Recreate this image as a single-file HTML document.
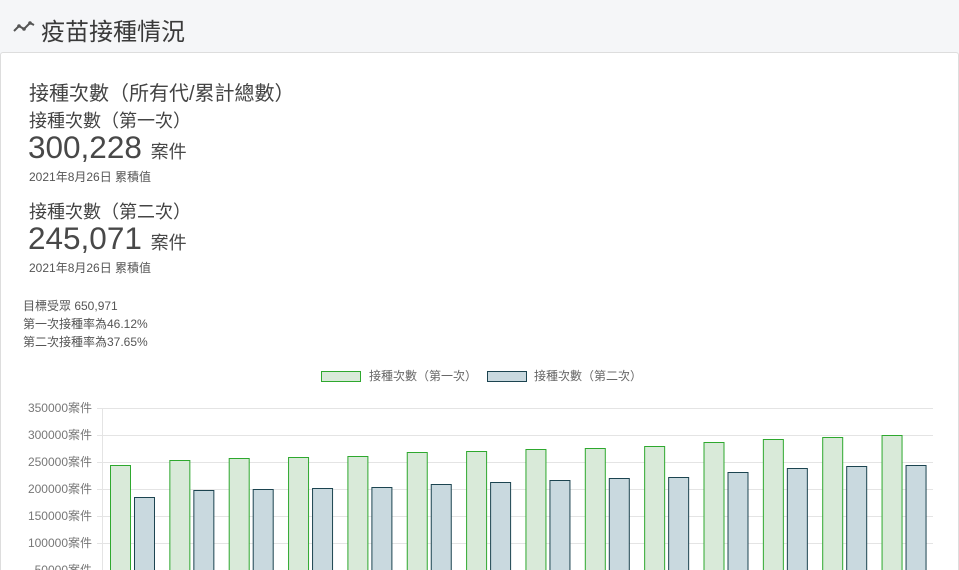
<!DOCTYPE html>
<html><head><meta charset="utf-8"><style>
body{margin:0;width:959px;height:570px;overflow:hidden;background:#f5f6f8;font-family:"Liberation Sans","Noto Sans CJK TC",sans-serif;color:#444;position:relative}
.a{position:absolute;white-space:nowrap}
.card{position:absolute;left:0;top:52px;width:957px;height:517px;background:#fff;border:1px solid #ddd;border-bottom:none;border-radius:3px 3px 0 0}
</style></head><body>
<svg class="a" style="left:12px;top:19px" width="24" height="16" viewBox="0 0 24 16"><polyline points="2,12 7,7 12,10 18,4 22,6" fill="none" stroke="#555" stroke-width="2"/><circle cx="7" cy="7" r="1.8" fill="#555"/><circle cx="12" cy="10" r="1.8" fill="#555"/><circle cx="18" cy="4" r="1.8" fill="#555"/></svg>
<div class="a" style="left:41px;top:12px;font-size:24px;color:#3a3a3a">疫苗接種情況</div>
<div class="card"></div>
<div class="a" style="left:29px;top:77px;font-size:20px;color:#444">接種次數（所有代/累計總數）</div>
<div class="a" style="left:29px;top:107px;font-size:18px;color:#444">接種次數（第一次）</div>
<div class="a" style="left:28px;top:129px;font-size:31.5px;color:#484848">300,228 <span style="font-size:18px">案件</span></div>
<div class="a" style="left:29px;top:168px;font-size:12px;color:#555">2021年8月26日 累積值</div>
<div class="a" style="left:29px;top:198px;font-size:18px;color:#444">接種次數（第二次）</div>
<div class="a" style="left:28px;top:220px;font-size:31.5px;color:#484848">245,071 <span style="font-size:18px">案件</span></div>
<div class="a" style="left:29px;top:259px;font-size:12px;color:#555">2021年8月26日 累積值</div>
<div class="a" style="left:23px;top:297px;font-size:12px;color:#555;line-height:18px">目標受眾 650,971<br>第一次接種率為46.12%<br>第二次接種率為37.65%</div>
<svg class="a" style="left:0;top:360px" width="959" height="210">
<rect x="321.5" y="11.5" width="39" height="10" fill="#d9ead9" stroke="#2ea82e"/>
<text x="369" y="20" font-size="12" fill="#666" font-family="Liberation Sans,Noto Sans CJK TC,sans-serif">接種次數（第一次）</text>
<rect x="487.5" y="11.5" width="39" height="10" fill="#c9d9df" stroke="#1c4450"/>
<text x="534" y="20" font-size="12" fill="#666" font-family="Liberation Sans,Noto Sans CJK TC,sans-serif">接種次數（第二次）</text>
<g stroke="#e4e4e4" stroke-width="1">
<line x1="97" y1="48.5" x2="933" y2="48.5"/><line x1="97" y1="75.5" x2="933" y2="75.5"/><line x1="97" y1="102.5" x2="933" y2="102.5"/><line x1="97" y1="129.5" x2="933" y2="129.5"/><line x1="97" y1="156.5" x2="933" y2="156.5"/><line x1="97" y1="183.5" x2="933" y2="183.5"/>
<line x1="102.5" y1="48" x2="102.5" y2="210"/>
</g>
<g font-size="12" fill="#777" text-anchor="end" font-family="Liberation Sans,Noto Sans CJK TC,sans-serif">
<text x="92" y="52">350000案件</text><text x="92" y="79">300000案件</text><text x="92" y="106">250000案件</text><text x="92" y="133">200000案件</text><text x="92" y="160">150000案件</text><text x="92" y="187">100000案件</text><text x="92" y="214">50000案件</text>
</g>
<g id="bars"></g>
</svg>
<script>
var g=[465,460,458,457,456,452,451,449,448,446,442,439,437,435],b=[497,490,489,488,487,484,482,480,478,477,472,468,466,465],s='';
for(var i=0;i<14;i++){var x=102+i*59.35;
s+='<rect x="'+(x+8.5)+'" y="'+(g[i]-360+.5)+'" width="20" height="'+(570-g[i]+5)+'" fill="#d9ead9" stroke="#2ea82e"/>';
s+='<rect x="'+(x+32.5)+'" y="'+(b[i]-360+.5)+'" width="20" height="'+(570-b[i]+5)+'" fill="#c9d9df" stroke="#1c4450"/>';}
document.getElementById('bars').innerHTML=s;
</script>
</body></html>
